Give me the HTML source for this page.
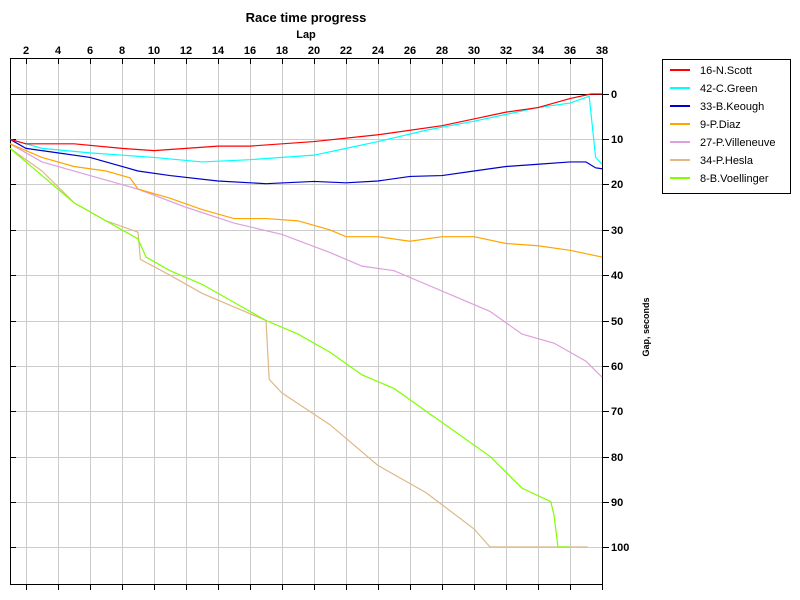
<!DOCTYPE html>
<html><head><meta charset="utf-8"><style>
html,body{margin:0;padding:0;background:#fff;}
svg{display:block;font-family:"Liberation Sans",sans-serif;}
.t{font-weight:bold;font-size:11px;}
</style></head><body>
<svg width="800" height="600" viewBox="0 0 800 600" xmlns="http://www.w3.org/2000/svg">
<rect width="800" height="600" fill="#fff"/>
<text x="306" y="22" text-anchor="middle" font-weight="bold" font-size="13">Race time progress</text>
<text x="306" y="38" text-anchor="middle" class="t">Lap</text>
<g class="t" text-anchor="middle">
<text x="26" y="54">2</text><text x="58" y="54">4</text><text x="90" y="54">6</text><text x="122" y="54">8</text><text x="154" y="54">10</text><text x="186" y="54">12</text><text x="218" y="54">14</text><text x="250" y="54">16</text><text x="282" y="54">18</text><text x="314" y="54">20</text><text x="346" y="54">22</text><text x="378" y="54">24</text><text x="410" y="54">26</text><text x="442" y="54">28</text><text x="474" y="54">30</text><text x="506" y="54">32</text><text x="538" y="54">34</text><text x="570" y="54">36</text><text x="602" y="54">38</text>
</g>
<g stroke="#cccccc" stroke-width="1">
<path d="M26.5 58V584M58.5 58V584M90.5 58V584M122.5 58V584M154.5 58V584M186.5 58V584M218.5 58V584M250.5 58V584M282.5 58V584M314.5 58V584M346.5 58V584M378.5 58V584M410.5 58V584M442.5 58V584M474.5 58V584M506.5 58V584M538.5 58V584M570.5 58V584"/>
<path d="M10 139.5H602M10 184.5H602M10 230.5H602M10 275.5H602M10 321.5H602M10 366.5H602M10 411.5H602M10 457.5H602M10 502.5H602M10 547.5H602"/>
</g>
<path d="M10 94.5H602" stroke="#000"/>
<g stroke="#000" stroke-width="1" fill="none">
<rect x="10.5" y="58.5" width="592" height="526"/>
<path d="M26.5 58V64M58.5 58V64M90.5 58V64M122.5 58V64M154.5 58V64M186.5 58V64M218.5 58V64M250.5 58V64M282.5 58V64M314.5 58V64M346.5 58V64M378.5 58V64M410.5 58V64M442.5 58V64M474.5 58V64M506.5 58V64M538.5 58V64M570.5 58V64"/>
<path d="M26.5 584V590M58.5 584V590M90.5 584V590M122.5 584V590M154.5 584V590M186.5 584V590M218.5 584V590M250.5 584V590M282.5 584V590M314.5 584V590M346.5 584V590M378.5 584V590M410.5 584V590M442.5 584V590M474.5 584V590M506.5 584V590M538.5 584V590M570.5 584V590M602.5 584V590"/>
<path d="M602 94.5H609M602 139.5H609M602 184.5H609M602 230.5H609M602 275.5H609M602 321.5H609M602 366.5H609M602 411.5H609M602 457.5H609M602 502.5H609M602 547.5H609"/>
<path d="M10 94.5H16M10 139.5H16M10 184.5H16M10 230.5H16M10 275.5H16M10 321.5H16M10 366.5H16M10 411.5H16M10 457.5H16M10 502.5H16M10 547.5H16"/>
</g>
<g class="t">
<text x="611" y="98">0</text><text x="611" y="143">10</text><text x="611" y="188">20</text><text x="611" y="234">30</text><text x="611" y="279">40</text><text x="611" y="325">50</text><text x="611" y="370">60</text><text x="611" y="415">70</text><text x="611" y="461">80</text><text x="611" y="506">90</text><text x="611" y="551">100</text>
</g>
<text transform="translate(649,327) rotate(-90)" text-anchor="middle" font-weight="bold" font-size="9">Gap, seconds</text>
<g fill="none" stroke-width="1.2" transform="translate(-6,94) scale(16,4.53)">
<polyline vector-effect="non-scaling-stroke" stroke="#deb887" points="1,12 3,17 5,24 7,28 9,30.5 9.15,36.5 11,40 13,44 15,47 17,50 17.2,63 18,66 21,73 24,82 27,88 30,96 31,100 37.1,100"/>
<polyline vector-effect="non-scaling-stroke" stroke="#7fff00" points="1,12 3,18 5,24 7,28 9,32 9.5,36 11,39 13,42 15,46 17,50 19,53 21,57 23,62 25,65 27,70 29,75 31,80 33,87 34.8,90 35,93 35.25,100 36,100"/>
<polyline vector-effect="non-scaling-stroke" stroke="#dda0dd" points="1,11 3,15 6,18 9,21 12,25 15,28.5 18,31 21,35 23,38 25,39 27,42 29,45 31,48 33,53 35,55 37,59 38,62.5"/>
<polyline vector-effect="non-scaling-stroke" stroke="#ffa500" points="1,11 3,14 5,16 7,17 8.5,18.5 9,21 11,23 13,25.5 15,27.5 17,27.5 19,28 21,30 22,31.5 24,31.5 26,32.5 28,31.5 30,31.5 32,33 34,33.5 36,34.5 38,36"/>
<polyline vector-effect="non-scaling-stroke" stroke="#0000cd" points="1,10 2,12 4,13 6,14 9,17 11,18 14,19.2 17,19.8 20,19.3 22,19.6 24,19.2 26,18.2 28,18 30,17 32,16 34,15.5 36,15 37,15 37.6,16.3 38,16.5"/>
<polyline vector-effect="non-scaling-stroke" stroke="#00ffff" points="1,10 3,12 6,13 10,14 13,15 16,14.5 20,13.5 22,12 24,10.5 27,8 30,6 32,4.5 34,3 36,2 37.2,0.5 37.6,14 38,15.5"/>
<polyline vector-effect="non-scaling-stroke" stroke="#ff0000" points="1,10 2,11 5,11 8,12 10,12.5 14,11.5 16,11.5 20,10.5 24,9 28,7 30,5.5 32,4 34,3 36,1 37.3,0 38,0"/>
</g>
<rect x="662.5" y="59.5" width="128" height="134" fill="#fff" stroke="#000"/>
<g stroke-width="2">
<path d="M670 70H690" stroke="#ff0000"/><path d="M670 88H690" stroke="#00ffff"/><path d="M670 106H690" stroke="#0000cd"/><path d="M670 124H690" stroke="#ffa500"/><path d="M670 142H690" stroke="#dda0dd"/><path d="M670 160H690" stroke="#deb887"/><path d="M670 178H690" stroke="#7fff00"/>
</g>
<g font-size="11" fill="#000">
<text x="700" y="74">16-N.Scott</text><text x="700" y="92">42-C.Green</text><text x="700" y="110">33-B.Keough</text><text x="700" y="128">9-P.Diaz</text><text x="700" y="146">27-P.Villeneuve</text><text x="700" y="164">34-P.Hesla</text><text x="700" y="182">8-B.Voellinger</text>
</g>
</svg>
</body></html>
